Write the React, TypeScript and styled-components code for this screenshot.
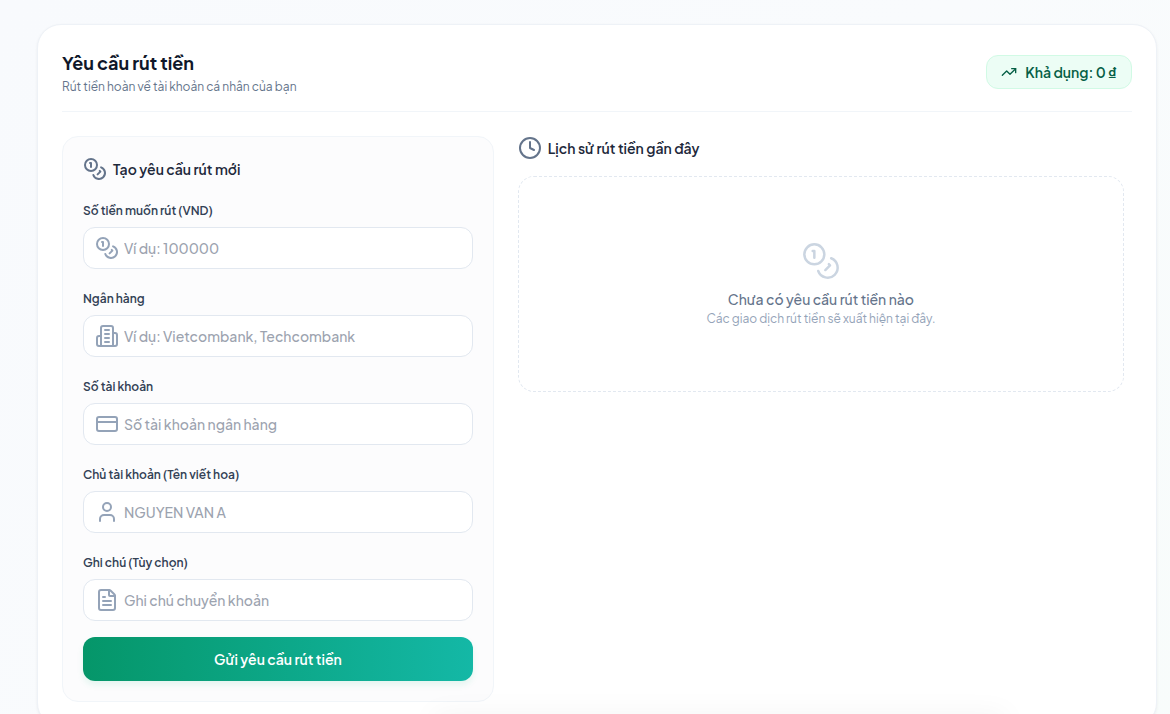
import React from "react";
import styled, { createGlobalStyle } from "styled-components";
import { Clock, CreditCard, FileText, TrendingUp, User } from "lucide-react";

const GlobalStyle = createGlobalStyle`
  *, *::before, *::after { box-sizing: border-box; }
  body {
    margin: 0;
    background: #f8fafc;
    color: #1e293b;
    font-family: "Plus Jakarta Sans", Inter, "Noto Sans", sans-serif;
    font-size: 14px;
    line-height: 20px;
  }
  h2, h3, p { margin: 0; }
`;

const Page = styled.main`
  padding: 24px 13px 24px 37px;
  background: linear-gradient(135deg, #f8fafd 0%, #f9fbfd 50%, #f8fcfb 100%);

  /* soft glow rising from the lower edge of the window */
  &::after {
    content: "";
    position: fixed;
    left: 37%;
    right: 14%;
    bottom: -20px;
    height: 20px;
    box-shadow: 0 0 28px rgba(0, 0, 0, 0.05);
    pointer-events: none;
  }
`;

const Card = styled.section`
  padding: 24px;
  background: #ffffff;
  border: 1px solid #eef2f7;
  border-radius: 24px;
  box-shadow: 0 1px 3px rgba(15, 23, 42, 0.06);
`;

const Header = styled.header`
  display: flex;
  align-items: center;
  justify-content: space-between;
  gap: 16px;
  padding-bottom: 16px;
  margin-bottom: 24px;
  border-bottom: 1px solid #f1f5f9;
`;

const Title = styled.h2`
  color: #0f172a;
  font-size: 18px;
  font-weight: 700;
  line-height: 28px;
`;

const Caption = styled.p<{ $color: string }>`
  margin-top: 2px;
  color: ${(p) => p.$color};
  font-size: 12px;
  line-height: 16px;
`;

const Balance = styled.div`
  display: flex;
  align-items: center;
  gap: 8px;
  padding: 6px 14px;
  color: #065f46;
  font-weight: 600;
  white-space: nowrap;
  background: #ecfdf5;
  border: 1px solid #d1fae5;
  border-radius: 12px;
`;

const Columns = styled.div`
  display: grid;
  grid-template-columns: repeat(12, minmax(0, 1fr));
  gap: 24px;
`;

const FormPanel = styled.div`
  grid-column: span 5;
  padding: 20px;
  background: #fcfcfd;
  border: 1px solid #f1f5f9;
  border-radius: 16px;
`;

const HistoryPanel = styled.div`
  grid-column: span 7;
  padding-right: 8px;
`;

const SectionTitle = styled.h3`
  display: flex;
  align-items: center;
  gap: 6px;
  height: 24px;
  margin-bottom: 16px;
  font-size: 14px;
  font-weight: 600;
  line-height: 24px;

  svg { color: #64748b; }
`;

const Form = styled.form`
  display: flex;
  flex-direction: column;
  gap: 16px;
`;

const FieldGroup = styled.div`
  display: flex;
  flex-direction: column;
  gap: 6px;
  padding-top: 4px;
`;

const Label = styled.label`
  color: #334155;
  font-size: 12px;
  font-weight: 600;
  line-height: 20px;
`;

const InputBox = styled.div`
  display: flex;
  align-items: center;
  gap: 5px;
  padding: 0 11px;
  background: #ffffff;
  border: 1px solid #e2e8f0;
  border-radius: 12px;

  svg { flex: none; color: #94a3b8; }
  &:focus-within { border-color: #10b981; }
`;

const Input = styled.input`
  flex: 1;
  min-width: 0;
  padding: 10px 0;
  color: #1e293b;
  font: inherit;
  font-weight: 500;
  background: transparent;
  border: 0;
  outline: 0;

  &::placeholder { color: #9ca3af; }
`;

const Submit = styled.button`
  padding: 12px;
  color: #ffffff;
  font: inherit;
  font-weight: 600;
  background: linear-gradient(to right, #059669, #14b8a6);
  border: 0;
  border-radius: 12px;
  box-shadow: 0 4px 6px rgba(16, 185, 129, 0.1);
  cursor: pointer;
`;

const EmptyState = styled.div`
  display: flex;
  flex-direction: column;
  align-items: center;
  padding: 64px 16px;
  text-align: center;
  border: 1px dashed #e2e8f0;
  border-radius: 16px;

  svg { margin-bottom: 8px; color: #cbd5e1; }
`;

const EmptyTitle = styled.p`
  color: #64748b;
  font-weight: 500;
`;

function Coins({ size = 24 }: { size?: number }) {
  return (
    <svg width={size} height={size} viewBox="0 0 24 24" fill="none" stroke="currentColor"
      strokeWidth={size > 24 ? 1.5 : 2} strokeLinecap="round" strokeLinejoin="round" aria-hidden="true">
      <circle cx="8" cy="8" r="6" />
      <path d="M18.09 10.37A6 6 0 1 1 10.34 18" />
      <path d="M7 6h1v4" />
      <path d="m16.71 13.88.7.71-2.82 2.82" />
    </svg>
  );
}

function Building() {
  return (
    <svg width="24" height="24" viewBox="0 0 24 24" fill="none" stroke="currentColor"
      strokeWidth="2" strokeLinecap="round" strokeLinejoin="round" aria-hidden="true">
      <path d="M6 22V4a2 2 0 0 1 2-2h8a2 2 0 0 1 2 2v18Z" />
      <path d="M6 12H4a2 2 0 0 0-2 2v6a2 2 0 0 0 2 2h2" />
      <path d="M18 9h2a2 2 0 0 1 2 2v9a2 2 0 0 1-2 2h-2" />
      <path d="M10 6h4M10 10h4M10 14h4M10 18h4" />
    </svg>
  );
}

const fields = [
  { id: "amount", label: "Số tiền muốn rút (VND)", placeholder: "Ví dụ: 100000", icon: <Coins /> },
  { id: "bank", label: "Ngân hàng", placeholder: "Ví dụ: Vietcombank, Techcombank", icon: <Building /> },
  { id: "account", label: "Số tài khoản", placeholder: "Số tài khoản ngân hàng", icon: <CreditCard /> },
  { id: "owner", label: "Chủ tài khoản (Tên viết hoa)", placeholder: "NGUYEN VAN A", icon: <User /> },
  { id: "note", label: "Ghi chú (Tùy chọn)", placeholder: "Ghi chú chuyển khoản", icon: <FileText /> },
];

export default function App() {
  return (
    <>
      <GlobalStyle />
      <Page>
        <Card>
          <Header>
            <div>
              <Title>Yêu cầu rút tiền</Title>
              <Caption $color="#64748b">Rút tiền hoàn về tài khoản cá nhân của bạn</Caption>
            </div>
            <Balance>
              <TrendingUp size={16} />
              <span>Khả dụng: 0 ₫</span>
            </Balance>
          </Header>
          <Columns>
            <FormPanel>
              <SectionTitle><Coins />Tạo yêu cầu rút mới</SectionTitle>
              <Form onSubmit={(e) => e.preventDefault()}>
                {fields.map((f) => (
                  <FieldGroup key={f.id}>
                    <Label htmlFor={f.id}>{f.label}</Label>
                    <InputBox>
                      {f.icon}
                      <Input id={f.id} type="text" placeholder={f.placeholder} />
                    </InputBox>
                  </FieldGroup>
                ))}
                <Submit type="submit">Gửi yêu cầu rút tiền</Submit>
              </Form>
            </FormPanel>
            <HistoryPanel>
              <SectionTitle><Clock />Lịch sử rút tiền gần đây</SectionTitle>
              <EmptyState>
                <Coins size={40} />
                <EmptyTitle>Chưa có yêu cầu rút tiền nào</EmptyTitle>
                <Caption $color="#94a3b8">Các giao dịch rút tiền sẽ xuất hiện tại đây.</Caption>
              </EmptyState>
            </HistoryPanel>
          </Columns>
        </Card>
      </Page>
    </>
  );
}
